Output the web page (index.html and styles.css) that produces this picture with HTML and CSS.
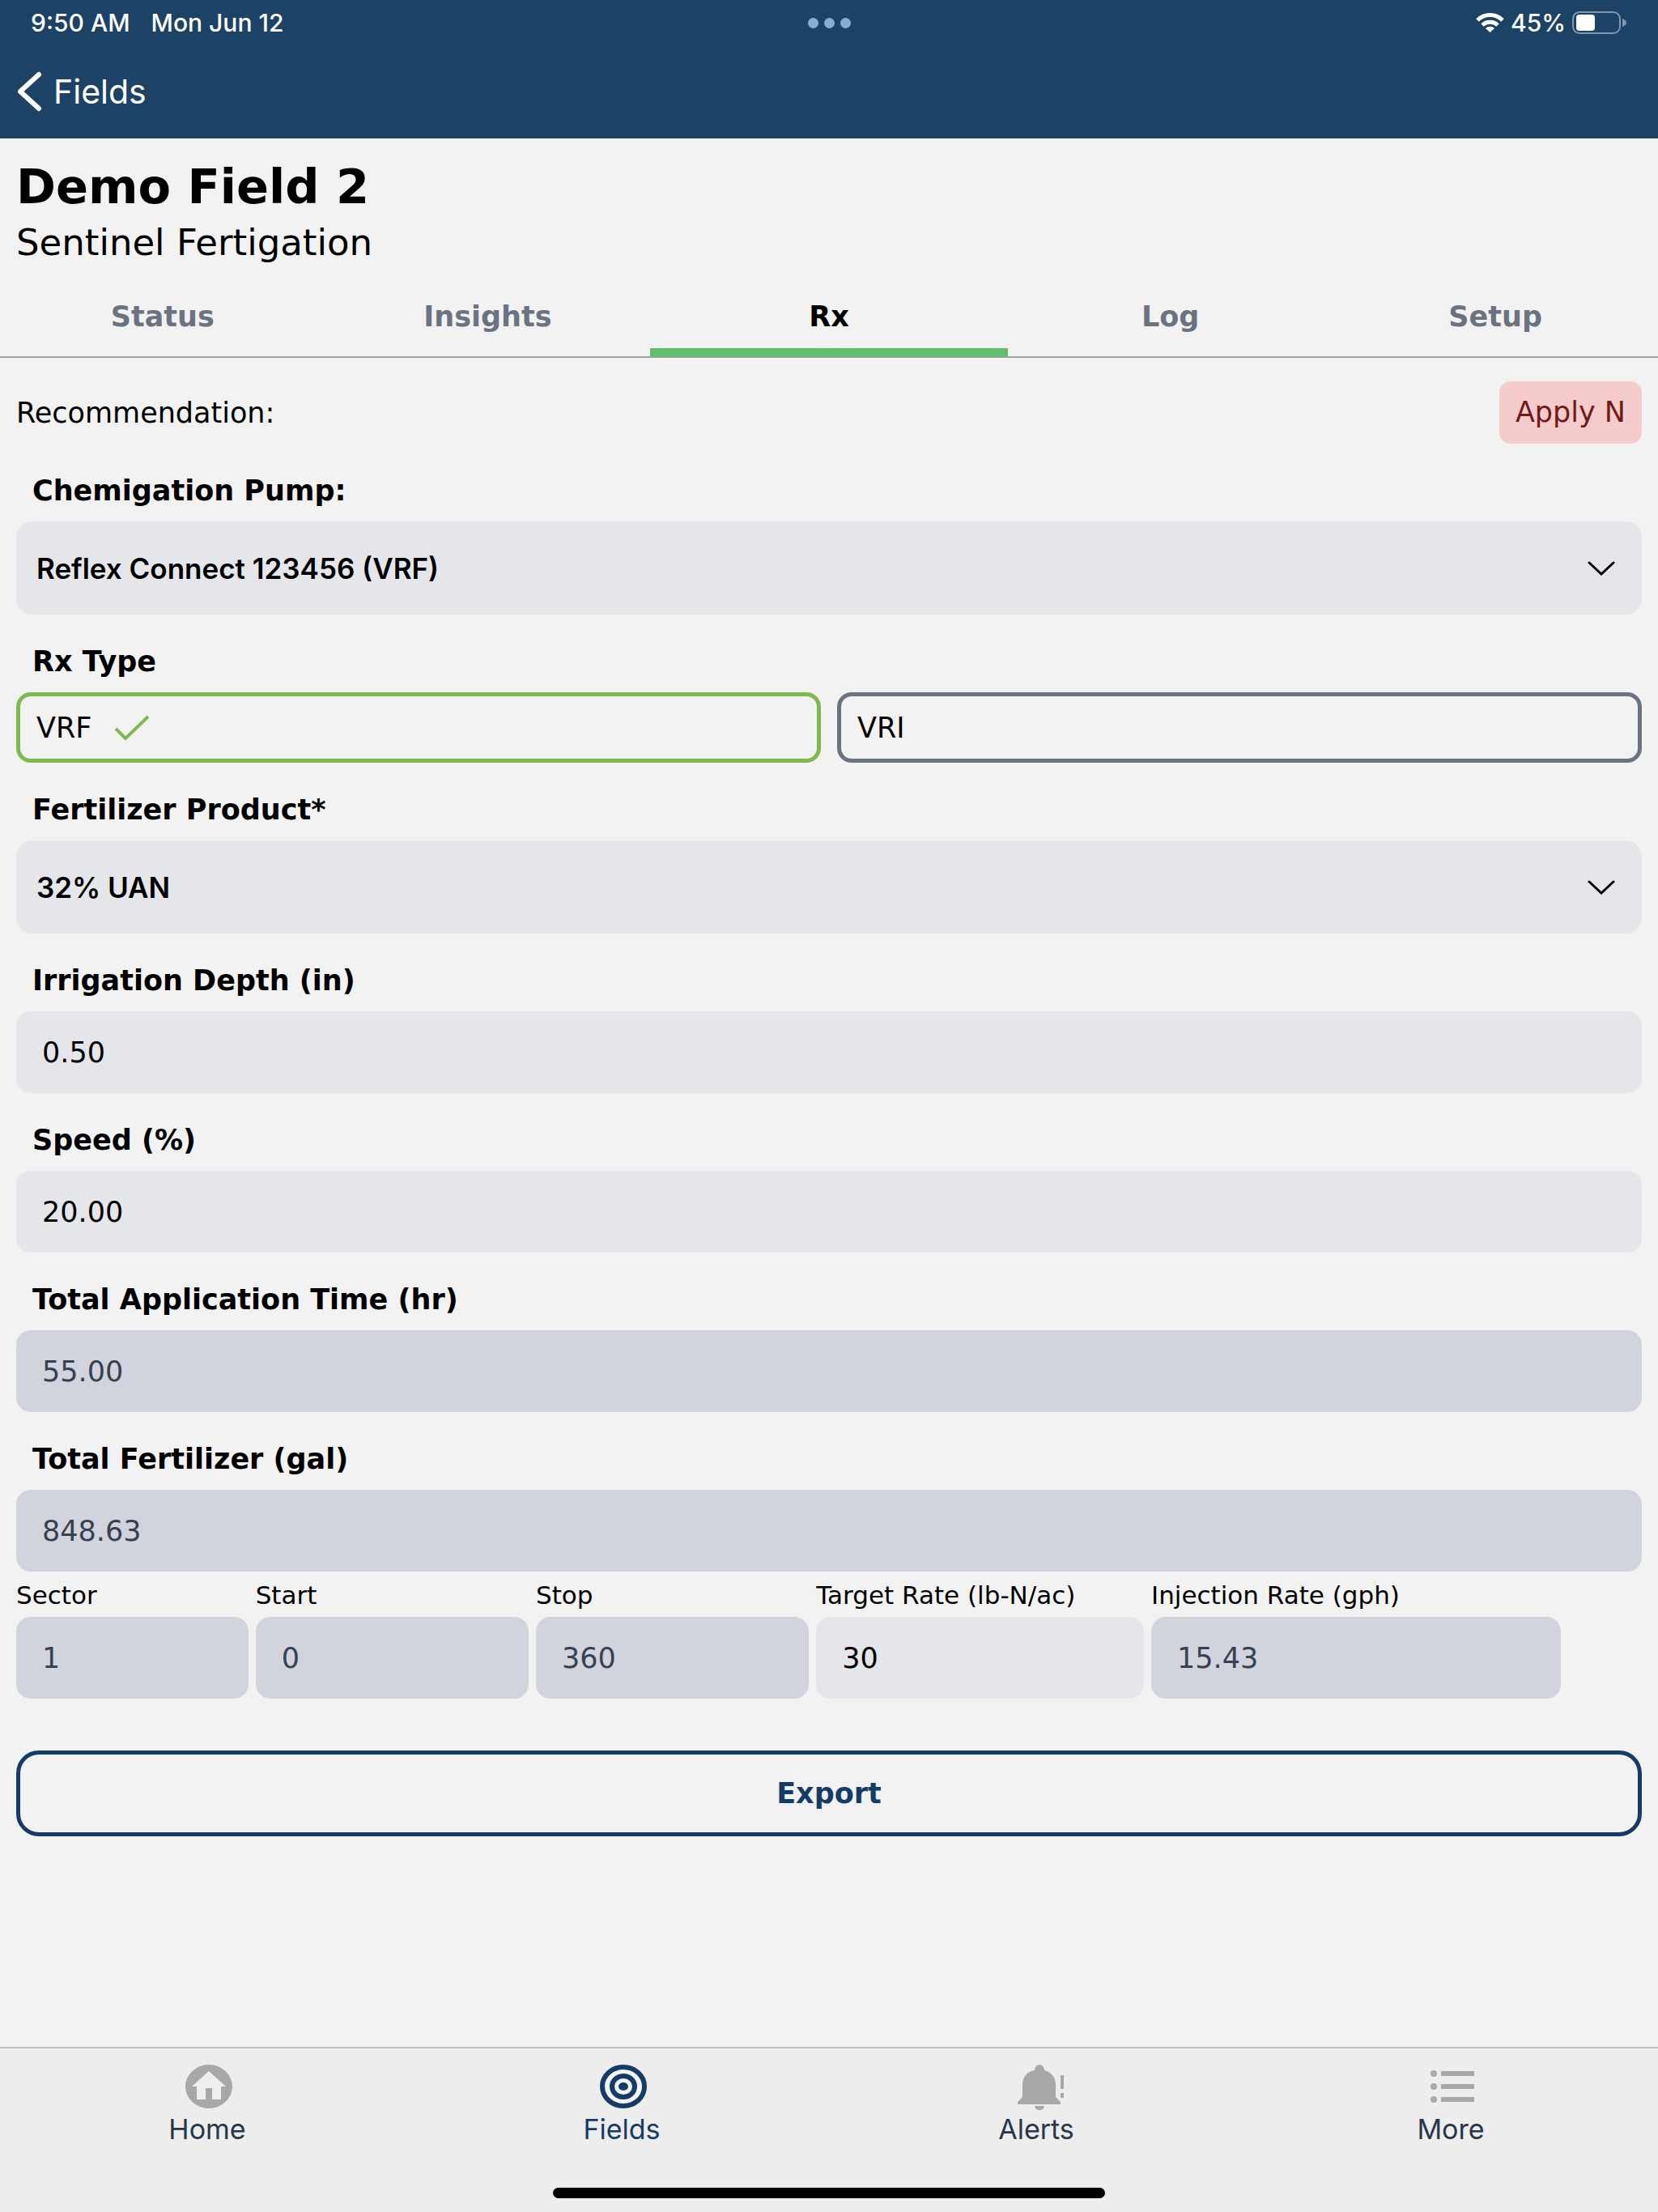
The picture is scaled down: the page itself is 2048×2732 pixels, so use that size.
FILE: index.html
```html
<!DOCTYPE html>
<html lang="en">
<head>
    <meta charset="UTF-8">
    <meta name="viewport" content="width=device-width, initial-scale=1.0">
    <title>Demo Field 2 - Rx</title>
    <link rel="stylesheet" href="styles.css">
</head>
<body>
    <header>
        <div class="status-bar">
            <div class="status-left">
                <span>9:50 AM</span>
                <span>Mon Jun 12</span>
            </div>
            <div class="dots"><i></i><i></i><i></i></div>
            <div class="status-right">
                <svg class="wifi" viewBox="0 0 35 24">
                    <path d="M2 9 A22 22 0 0 1 33 9" fill="none" stroke="#fff" stroke-width="5"/>
                    <path d="M8 15 A14 14 0 0 1 27 15" fill="none" stroke="#fff" stroke-width="5"/>
                    <path d="M12 19 A8 8 0 0 1 23 19 L17.5 24 Z" fill="#fff"/>
                </svg>
                <span>45%</span>
                <svg class="battery" viewBox="0 0 68 28">
                    <rect x="1" y="1" width="58" height="26" rx="8" fill="none" stroke="#7f97ae" stroke-width="2"/>
                    <rect x="5" y="4" width="23" height="20" rx="4" fill="#fff"/>
                    <path d="M62 9 Q67 11 67 14 Q67 17 62 19 Z" fill="#7f97ae"/>
                </svg>
            </div>
        </div>
        <a class="back" href="#">
            <svg viewBox="0 0 30 48"><path d="M28 3 L5 24 L28 45" fill="none" stroke="#fff" stroke-width="6" stroke-linecap="round" stroke-linejoin="round"/></svg>
            Fields
        </a>
    </header>

    <div class="title">
        <h1>Demo Field 2</h1>
        <p>Sentinel Fertigation</p>
    </div>
    <nav class="tabs">
        <a href="#">Status</a>
        <a href="#">Insights</a>
        <a href="#" class="active">Rx</a>
        <a href="#">Log</a>
        <a href="#">Setup</a>
    </nav>

    <main>
        <form action="#">
            <div class="recommendation">
                <span>Recommendation:</span>
                <span class="badge">Apply N</span>
            </div>

            <label class="label" for="pump">Chemigation Pump:</label>
            <div class="select">
                <select id="pump">
                    <option>Reflex Connect 123456 (VRF)</option>
                </select>
                <svg viewBox="0 0 34 20"><path d="M2 2 L17 16 L32 2" fill="none" stroke="#000" stroke-width="3" stroke-linecap="round"/></svg>
            </div>

            <fieldset>
                <legend class="label">Rx Type</legend>
                <div class="types">
                    <label class="type">
                        <input type="radio" name="rxType" value="VRF" checked>
                        VRF
                        <svg viewBox="0 0 44 32"><path d="M2 17 L14 29 L42 2" fill="none" stroke="#7dbb4c" stroke-width="4"/></svg>
                    </label>
                    <label class="type">
                        <input type="radio" name="rxType" value="VRI">
                        VRI
                    </label>
                </div>
            </fieldset>

            <label class="label" for="product">Fertilizer Product*</label>
            <div class="select">
                <select id="product">
                    <option>32% UAN</option>
                </select>
                <svg viewBox="0 0 34 20"><path d="M2 2 L17 16 L32 2" fill="none" stroke="#000" stroke-width="3" stroke-linecap="round"/></svg>
            </div>

            <label class="label" for="depth">Irrigation Depth (in)</label>
            <input type="text" id="depth" value="0.50">

            <label class="label" for="speed">Speed (%)</label>
            <input type="text" id="speed" value="20.00">

            <label class="label" for="time">Total Application Time (hr)</label>
            <input type="text" id="time" value="55.00" disabled>

            <label class="label" for="total">Total Fertilizer (gal)</label>
            <input type="text" id="total" value="848.63" disabled>

            <div class="sectors">
                <label>Sector <input type="text" value="1" disabled></label>
                <label>Start <input type="text" value="0" disabled></label>
                <label>Stop <input type="text" value="360" disabled></label>
                <label>Target Rate (lb-N/ac) <input type="text" value="30"></label>
                <label>Injection Rate (gph) <input type="text" value="15.43" disabled></label>
            </div>

            <button type="submit" class="export">Export</button>
        </form>
    </main>

    <footer>
        <nav class="bottom-nav">
            <a href="#">
                <svg viewBox="0 0 60 56">
                    <ellipse cx="32" cy="28" rx="29" ry="27" fill="#a8a8a8"/>
                    <path d="M32 9 L53 28 H47 V44 H36 V30 H28 V44 H17 V28 H11 Z" fill="#eee"/>
                </svg>
                Home
            </a>
            <a href="#" class="active">
                <svg viewBox="0 0 60 56" fill="none" stroke="#153c66">
                    <ellipse cx="32" cy="28" rx="26" ry="24" stroke-width="6" fill="#f4f4f4"/>
                    <ellipse cx="32" cy="28" rx="14" ry="13" stroke-width="6"/>
                    <ellipse cx="32" cy="28" rx="6" ry="5" fill="#153c66" stroke="none"/>
                </svg>
                Fields
            </a>
            <a href="#">
                <svg viewBox="-4 0 60 56" fill="#a8a8a8">
                    <path d="M24 8 C24 -1 36 -1 36 8 C45 10 50 17 50 26 V41 L56 47 V50 H3 V47 L9 41 V26 C9 17 14 10 24 8 Z"/>
                    <path d="M24 52 H36 C35 59 25 59 24 52 Z"/>
                    <path d="M56 14 h4 v17 h-4 Z M56 36 h4 v6 h-4 Z"/>
                </svg>
                Alerts
            </a>
            <a href="#">
                <svg viewBox="0 0 60 56" fill="#a8a8a8">
                    <circle cx="9" cy="12" r="4"/>
                    <circle cx="9" cy="28" r="4"/>
                    <circle cx="9" cy="44" r="4"/>
                    <path d="M18 9 h41 v6 h-41 Z M18 25 h41 v6 h-41 Z M18 41 h41 v6 h-41 Z"/>
                </svg>
                More
            </a>
        </nav>
        <div class="home-indicator"></div>
    </footer>
</body>
</html>
```
FILE: styles.css
```css
*{
    margin: 0;
    padding: 0;
    box-sizing: border-box;
}
:root{
    --navy: #1c4266;
    --navy-dark: #153c66;
    --gray: #6b7280;
    --green: #7dbb4c;
    --input-background: #e5e6ea;
    --disabled-background: #d1d4dc;
    --font: Verdana, "DejaVu Sans", sans-serif;
    --font-alternate: Inter, sans-serif;
}
body{
    min-height: 100vh;
    display: flex;
    flex-direction: column;
    background-color: #f2f2f2;
    color: #000;
    font-family: var(--font);
    font-size: 35px;
}
a{
    color: inherit;
    text-decoration: none;
}
svg{
    flex-shrink: 0;
    overflow: visible;
}

/* header */
header{
    height: 171px;
    background-color: var(--navy);
    color: #fff;
    font-family: var(--font-alternate);
}
.status-bar{
    display: grid;
    grid-template-columns: 1fr auto 1fr;
    align-items: center;
    height: 56px;
    padding: 0 38px;
    font-size: 30px;
    font-weight: 500;
}
.status-left{
    display: flex;
    gap: 26px;
}
.status-right{
    display: flex;
    justify-content: flex-end;
    align-items: center;
    gap: 8px;
}
.dots{
    display: flex;
    gap: 7px;
}
.dots i{
    width: 13px;
    height: 13px;
    border-radius: 50%;
    background-color: #86aed6;
}
.wifi{
    width: 35px;
    height: 24px;
}
.battery{
    width: 68px;
    height: 28px;
}
.back{
    display: inline-flex;
    align-items: center;
    gap: 16px;
    height: 116px;
    padding: 0 20px 2px;
    font-size: 41px;
}
.back svg{
    width: 30px;
    height: 48px;
}

/* title and tabs */
.title{
    padding: 25px 20px 0;
}
h1{
    font-size: 59px;
    line-height: 70px;
}
.title p{
    font-size: 45px;
    line-height: 67px;
}
.tabs{
    display: flex;
    height: 109px;
    border-bottom: 2px solid #9ca3af;
    color: var(--gray);
    font-weight: bold;
}
.tabs a{
    flex: 1;
    height: 108px;
    padding-top: 38px;
    line-height: 40px;
    text-align: center;
}
.tabs .active{
    flex: 1.1;
    border-bottom: 11px solid #5fbf6c;
    color: #000;
}

/* form */
main{
    padding: 29px 20px;
}
.recommendation{
    display: flex;
    justify-content: space-between;
    align-items: center;
}
.badge{
    padding: 0 20px;
    border-radius: 14px;
    background-color: #f5cbcb;
    color: #701a1a;
    line-height: 77px;
}
.label{
    display: block;
    padding: 38px 20px 18px;
    line-height: 40px;
    font-weight: bold;
}
.select{
    position: relative;
}
.select svg{
    position: absolute;
    top: 49px;
    right: 33px;
    width: 34px;
    height: 20px;
    pointer-events: none;
}
select{
    display: block;
    appearance: none;
    width: 100%;
    height: 115px;
    padding: 0 25px;
    border: none;
    border-radius: 20px;
    background-color: var(--input-background);
    color: #000;
    font: 600 35px var(--font-alternate);
}
fieldset{
    border: none;
}
.types{
    display: grid;
    grid-template-columns: 1fr 1fr;
    gap: 20px;
}
.type{
    display: flex;
    align-items: center;
    gap: 28px;
    height: 87px;
    padding: 0 20px;
    border: 5px solid var(--gray);
    border-radius: 18px;
}
.type:has(input:checked){
    border-color: var(--green);
}
.type input{
    position: absolute;
    opacity: 0;
}
.type svg{
    width: 44px;
    height: 32px;
}
input[type="text"]{
    display: block;
    width: 100%;
    height: 101px;
    padding: 0 32px;
    border: none;
    border-radius: 18px;
    background-color: var(--input-background);
    color: #000;
    font: 35px var(--font);
}
input[type="text"]:disabled{
    background-color: var(--disabled-background);
    color: #374151;
}
.sectors{
    display: grid;
    grid-template-columns: 17fr 20fr 20fr 24fr 30fr;
    gap: 9px;
    margin: 6px 100px 64px 0;
    font-size: 31px;
    line-height: 46px;
}
.sectors input[type="text"]{
    margin-top: 4px;
}
.export{
    display: block;
    width: 100%;
    height: 106px;
    border: 5px solid var(--navy-dark);
    border-radius: 28px;
    background: none;
    color: var(--navy-dark);
    font: bold 35px var(--font);
}

/* bottom navigation */
footer{
    margin-top: auto;
    height: 204px;
    border-top: 2px solid #c0c0c0;
    background-color: #ededed;
}
.bottom-nav{
    display: grid;
    grid-template-columns: repeat(4, 1fr);
    height: 172px;
    padding-top: 19px;
    color: #27364b;
    font: 34px/48px var(--font-alternate);
}
.bottom-nav a{
    display: flex;
    flex-direction: column;
    align-items: center;
    gap: 1px;
}
.bottom-nav svg{
    width: 60px;
    height: 56px;
}
.bottom-nav .active{
    color: var(--navy-dark);
}
.home-indicator{
    width: 33.3%;
    height: 13px;
    margin: 0 auto;
    border-radius: 7px;
    background-color: #000;
}
```
